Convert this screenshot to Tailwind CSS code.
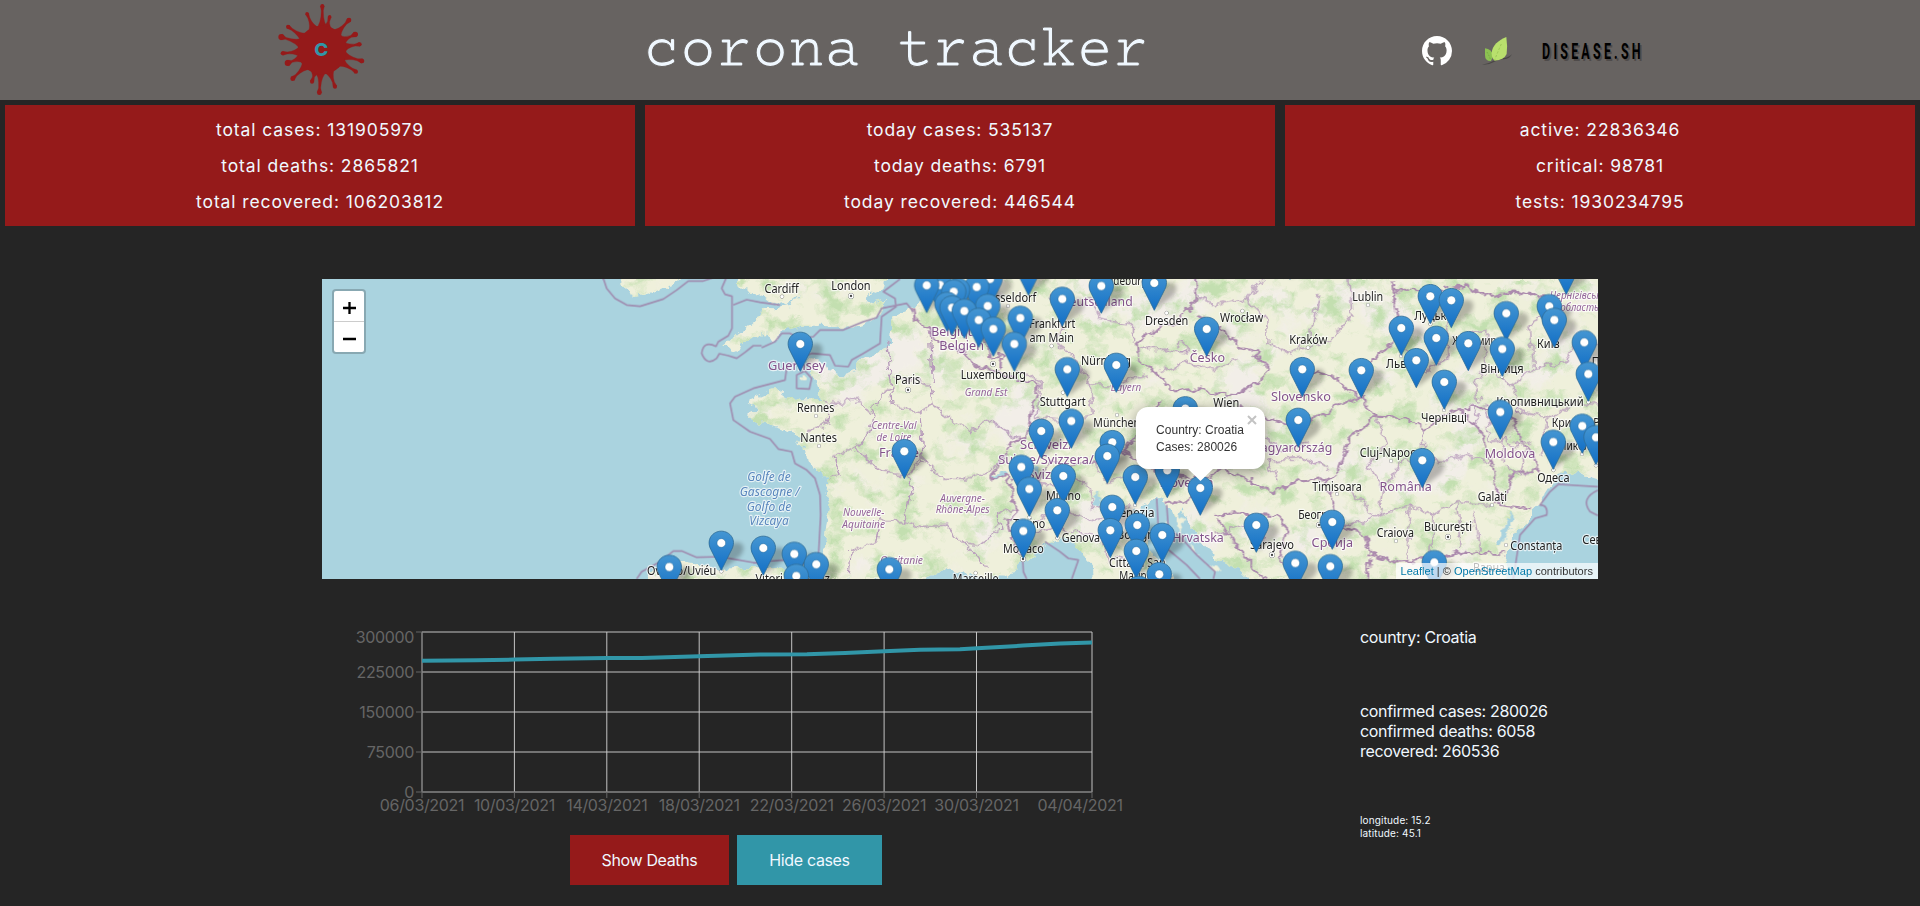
<!DOCTYPE html>
<html lang="en">
<head>
<meta charset="utf-8">
<title>corona tracker</title>
<script src="https://cdn.jsdelivr.net/npm/@tailwindcss/browser@4"></script>
</head>
<body class="bg-[#252525] font-['Inter',sans-serif] text-[#f0f8ff] h-[906px] overflow-hidden">

<header class="flex h-[100px] items-center bg-[#676361]">
  <svg id="logo" class="ml-[260px] h-[100px] w-[130px] shrink-0" viewBox="0 0 390 300">
    <g id="spikes" fill="#951a1a" stroke="#951a1a"></g>
    <circle cx="186" cy="150" r="73" fill="#951a1a"/>
    <text x="184" y="168" text-anchor="middle" font-family="Inter" font-weight="800" font-size="54" textLength="42" lengthAdjust="spacingAndGlyphs" fill="#3196a8">C</text>
  </svg>
  <h1 class="ml-[254px] w-[511px] shrink-0 whitespace-nowrap pt-[7px] font-['Courier_Prime','Nimbus_Mono_PS','Liberation_Mono',monospace] text-[60px] leading-[93px] tracking-[0.07px] [-webkit-text-stroke:1px_#676361]">corona tracker</h1>
  <nav class="ml-[267px] flex items-center pt-[2px]">
    <svg class="h-[30px] w-[30px]" viewBox="0 0 16 16" fill="#fff"><path d="M8 0C3.58 0 0 3.58 0 8c0 3.54 2.29 6.53 5.47 7.59.4.07.55-.17.55-.38 0-.19-.01-.82-.01-1.49-2.01.37-2.53-.49-2.69-.94-.09-.23-.48-.94-.82-1.13-.28-.15-.68-.52-.01-.53.63-.01 1.08.58 1.23.82.72 1.21 1.87.87 2.33.66.07-.52.28-.87.51-1.07-1.78-.2-3.64-.89-3.64-3.95 0-.87.31-1.59.82-2.15-.08-.2-.36-1.02.08-2.12 0 0 .67-.21 2.2.82.64-.18 1.32-.27 2-.27s1.36.09 2 .27c1.53-1.04 2.2-.82 2.2-.82.44 1.1.16 1.92.08 2.12.51.56.82 1.27.82 2.15 0 3.07-1.87 3.75-3.65 3.95.29.25.54.73.54 1.48 0 1.07-.01 1.93-.01 2.2 0 .21.15.46.55.38A8.01 8.01 0 0 0 16 8c0-4.42-3.58-8-8-8z"/></svg>
    <svg class="ml-[30px] h-[30px] w-[30px]" viewBox="0 0 90 90">
      <path d="M0 86Q20 84 38 73T68 66Q84 62 90 54Q84 68 66 70Q50 68 36 78Q18 88 0 86Z" fill="#4a4746"/>
      <path d="M9 37Q29 40 34 58L27 75Q9 76 9 56Z" fill="#8cc152"/>
      <path d="M73 3C50 12 30 28 29 52Q29 68 38 74Q66 72 74 54Q77 30 73 3Z" fill="#b9e06d"/>
      <path d="M58 24Q47 48 38 72" stroke="#9cc655" stroke-width="3" stroke-dasharray="7 5" fill="none"/>
      <path d="M15 48Q22 60 26 72" stroke="#689c3a" stroke-width="2" stroke-dasharray="5 4" fill="none"/>
    </svg>
    <svg class="ml-[26px] h-[40px] w-[110px]" viewBox="0 0 110 40">
      <g transform="scale(.58 1)" font-family="Roboto" font-weight="700" font-size="21.5">
        <text x="10" y="29.7" textLength="170" fill="#4f4b4a">DISEASE.SH</text>
        <text x="7" y="28.3" textLength="170" fill="#000">DISEASE.SH</text>
      </g>
    </svg>
  </nav>
</header>

<section class="mt-[5px] grid grid-cols-3 gap-[10px] px-[5px] text-center text-[17.5px] leading-[36px] tracking-[0.9px]">
  <div class="h-[121px] bg-[#951a1a] pt-[7px]"><p>total cases: 131905979</p><p>total deaths: 2865821</p><p>total recovered: 106203812</p></div>
  <div class="h-[121px] bg-[#951a1a] pt-[7px]"><p>today cases: 535137</p><p>today deaths: 6791</p><p>today recovered: 446544</p></div>
  <div class="h-[121px] bg-[#951a1a] pt-[7px]"><p>active: 22836346</p><p>critical: 98781</p><p>tests: 1930234795</p></div>
</section>

<main class="mx-auto mt-[53px] w-[1276px]">
  <div class="relative h-[300px] overflow-hidden bg-[#aad3df] font-['Liberation_Sans',sans-serif]">
    <svg class="block h-[300px] w-[1276px]" viewBox="0 0 3828 900">
      <defs>
        <filter id="rough" x="0" y="0" width="3828" height="900" filterUnits="userSpaceOnUse" color-interpolation-filters="sRGB"><feTurbulence type="fractalNoise" baseFrequency=".035" numOctaves="3" seed="4"/><feDisplacementMap in="SourceGraphic" scale="34" xChannelSelector="R" yChannelSelector="G"/></filter>
        <filter id="woods" x="0" y="0" width="3828" height="900" filterUnits="userSpaceOnUse" color-interpolation-filters="sRGB"><feTurbulence type="fractalNoise" baseFrequency=".014 .018" numOctaves="6" seed="11"/><feColorMatrix values="0 0 0 0 .765  0 0 0 0 .875  0 0 0 0 .69  3.6 0 0 0 -1.75"/><feComposite in2="SourceGraphic" operator="in"/></filter>
        <filter id="fields" x="0" y="0" width="3828" height="900" filterUnits="userSpaceOnUse" color-interpolation-filters="sRGB"><feTurbulence type="fractalNoise" baseFrequency=".006" numOctaves="5" seed="31"/><feColorMatrix values="0 0 0 0 .95  0 0 0 0 .935  0 0 0 0 .91  0 6 0 0 -3.1"/><feComposite in2="SourceGraphic" operator="in"/></filter>
        <filter id="soft" x="-50%" y="-50%" width="200%" height="200%"><feGaussianBlur stdDeviation="7"/></filter>
        <linearGradient id="blue" x1="0" y1="0" x2="0" y2="1"><stop offset="0" stop-color="#4596d2"/><stop offset="1" stop-color="#126fc6"/></linearGradient>
        <g id="land">
          <path transform="translate(-6 -12)" d="M885 0L905 30L930 48L938 68L1000 52L1060 28L1090 0Z"/>
          <g transform="translate(1194 -12)">
            <path d="M50 0L45 22L65 45L110 50L140 72L200 92L240 60L215 92L165 100L125 98L108 132L62 172L10 212L48 228L64 206L108 190L138 174L160 208L188 165L250 152L310 152L370 160L430 150L476 120L500 75L440 84L442 62L490 45L500 0Z"/>
            <path d="M655 0L618 50L576 100L515 125L510 210L480 232L415 258L410 290L380 300L320 292L310 262L262 256L275 290L292 330L300 370L245 370L208 374L190 345L140 352L80 378L112 402L82 414L105 442L155 452L210 470L242 482L232 508L262 532L266 562L300 598L326 612L320 645L330 685L320 740L313 800L304 870L290 890L200 885L100 880L0 884L-60 868L-110 858L-150 870L-190 880L-218 900L-222 920L622 920L650 890L675 878L720 888L770 904L862 908L892 870L930 850L975 812L1010 792L1048 790L1085 832L1118 874L1122 920L1376 920L1340 872L1290 832L1272 782L1240 742L1236 708L1280 690L1332 664L1346 700L1362 734L1386 700L1416 760L1446 805L1490 852L1560 888L1592 920L2355 920L2364 835L2380 782L2430 742L2430 712L2462 682L2500 622L2508 604L2560 592L2600 604L2650 620L2650 0Z"/>
          </g>
        </g>
      </defs>
      <g filter="url(#rough)"><use href="#land" fill="#eff0db"/></g>
      <g filter="url(#rough)"><g filter="url(#fields)"><use href="#land"/></g></g>
      <g filter="url(#rough)"><g filter="url(#woods)"><use href="#land"/></g></g>

      <!-- Channel Island, Venetian lagoon, Croatian islands, lakes -->
      <g fill="#aad3df" filter="url(#rough)"><path d="M2010 590L2050 575L2060 584L2020 602ZM2125 565L2150 560L2150 585L2130 580ZM2320 640L2335 660L2325 690L2314 670ZM3520 800L3570 700L3580 720L3540 790Z"/></g>
      <g fill="#eff0db" filter="url(#rough)"><path d="M1438 290L1456 288L1452 304L1440 302ZM2535 720L2545 770L2532 750ZM2560 700L2572 720L2590 710L2580 750L2565 745ZM2600 790L2630 830L2615 825ZM2640 850L2700 868L2680 880Z"/></g>

      <!-- territorial waters -->
      <g fill="none" stroke="#9f8db0" stroke-width="5" stroke-linejoin="round">
        <path transform="translate(-6 -12)" d="M850 10L860 40L885 70L920 90L960 94L1030 72L1070 45L1105 18L1150 18L1180 8M1218 10L1205 40L1215 58L1236 64V160L1225 182L1195 200L1188 214Q1150 195 1145 235Q1160 275 1190 250L1198 236L1225 242L1250 250L1275 232L1300 212L1325 212M950 912L965 890L1020 860L1060 828L1085 828L1130 847L1200 845L1240 852L1320 866"/>
        <g transform="translate(1194 -12)">
          <path d="M40 90L80 74L120 82L180 90M125 218L165 200L185 175L210 175L240 190L280 185L300 165L370 165L430 140L470 128L485 100L560 85L580 110M540 12L490 50L525 70L528 95L485 125L480 205L430 235L395 255L385 275L345 272L330 240L275 235L250 245L200 280L195 315L100 340L45 365L30 385L40 435L90 470L150 492L175 522L215 530L225 565L260 585L285 610L300 660L302 720L295 850L295 880M230 300L255 288L275 310L268 342L230 340ZM100 864L130 860L190 855L280 870"/>
        </g>
        <path transform="translate(2034 -12)" d="M80 912L70 890L68 852M135 800L180 830L205 850L235 855L215 912M470 670L475 760L500 820L560 870L600 912M500 690L505 760L545 790L590 840L645 890L640 912"/>
        <path transform="translate(2934 -12)" d="M894 645Q840 670 870 710L894 722M640 912L660 780L705 730L740 720Q745 690 720 690L750 650L775 628L894 635"/>
      </g>
      <!-- land borders -->
      <g fill="none" stroke="#ac8bae" stroke-width="6.5" filter="url(#rough)">
        <path transform="translate(1194 -12)" d="M580 100L585 140L625 155L640 190L690 215L735 240L780 280L830 285L870 310L955 325L935 400L920 490L880 500L850 540L815 610L860 600L880 660L890 710L860 740L880 800L905 850M800 200L805 240L845 245L840 280M780 12L770 120L790 190L800 210"/>
        <path transform="translate(2034 -12)" d="M585 12L590 70L560 110L530 140L470 160L410 200L415 250L480 310L520 350L590 340L640 355L710 360L770 320L810 280L770 240L720 220L680 170L640 150L590 120M480 380L460 440L410 480L370 530L300 560L230 570L150 560L100 640L40 600M370 530L420 560L490 600L590 610L660 590L720 550L730 480L760 430L720 390M500 680L560 680L600 650L660 580L760 620L820 650L900 620L990 610M800 420L870 460L950 430L1020 390L1090 360M640 720L700 715L830 720L860 760L840 850L880 912M650 730L700 800L760 880L800 912"/>
        <path transform="translate(2934 -12)" d="M275 12L285 100L300 180L220 250L190 290L180 370L90 300L30 290M180 370L230 420L150 490L115 590L75 625L100 680L120 760L200 780L210 840L300 860L400 850L500 830L590 840L620 830M230 425L320 430L370 460L420 430L480 400L540 470L570 540L590 620L595 690M480 400L560 395L640 430L655 490L700 540L715 590L640 590L610 680M275 45L400 50L500 35L560 65L640 50L760 70M595 690L690 700M210 850L200 912"/>
      </g>
      <!-- regions -->
      <g fill="none" stroke="#b79abb" stroke-width="4" filter="url(#rough)">
        <path transform="translate(1194 -12)" d="M300 378L350 385L400 375L460 410L480 360L515 340L500 200M515 340L520 390L600 410L640 390L630 330L520 310M640 390L700 440L750 470L810 435L900 490M460 410L450 470L410 520L345 540L360 600L325 605M410 520L450 560L480 590L560 600L610 560L600 420M560 600L580 640L550 740L480 740L470 800L390 830L385 900M550 740L600 755L680 750L720 800L780 810L840 760L830 720L880 700M610 560L670 610L740 610L810 590L860 540M330 390L320 450L260 470M640 320L630 160M720 790L760 830L800 880"/>
        <path transform="translate(2034 -12)" d="M270 60L300 130L400 150L400 200M150 60L200 110L170 200L230 250L270 330L280 420L200 440L110 430L120 320L50 280M270 330L340 330L440 300M590 60L650 90L740 70L790 12M740 70L800 130L800 200L870 240L930 180L960 60M480 290L560 260L640 290L720 250M620 420L660 520L730 500M40 600L160 640L200 600L270 640L280 700L400 690M100 740L180 700L280 740L380 720M280 560L320 620L390 600M420 220L500 220L560 240M930 500L850 530L770 470M840 620L800 560L900 550L990 580M650 780L720 750L800 790M60 770L160 760L300 780L330 860L420 830M540 220L530 210Q550 195 565 220Q560 238 540 230"/>
        <path transform="translate(2934 -12)" d="M150 12L155 120L90 200L0 220M270 160L340 250L380 290L450 240L440 150L480 60M480 180L560 170L560 280L640 330L700 280L690 150L760 100M560 280L520 330L540 380M640 330L660 410L760 430L820 380L894 390M700 280L790 260L830 200L894 210M230 430L260 510L200 570L250 640L310 560L370 540L370 460M370 540L430 560L500 540L570 560M250 640L240 720L330 690L400 720L470 680L580 690M330 690L320 850M400 720L390 850M470 680L480 820M520 710L540 830M150 640L220 720M120 760L240 720M740 430L730 540M510 390L540 430L520 450M560 400L570 440L610 430M570 500L620 490L640 520L690 500M560 420L570 500M600 400L610 560M640 500L680 520L660 600L700 590M620 570L650 600"/>
      </g>
      <g id="labels" font-family="Noto Sans" text-anchor="middle" paint-order="stroke" stroke="#ffffffb0" stroke-width="7" stroke-linejoin="round"></g>
      <g id="pins"></g>
    </svg>

    <div class="absolute left-[10px] top-[10px] h-[65px] w-[34px] rounded-[4px] border-2 border-black/20 bg-white bg-clip-padding">
      <svg class="block h-[61px] w-[30px]" viewBox="0 0 30 61"><path d="M0 30.5H30" stroke="#ccc"/><path d="M9 17H22M15.5 11V23M9 48H22" stroke="#000" stroke-width="2.3"/></svg>
    </div>

    <div class="absolute left-[814px] top-[128px] h-[62px] w-[129px] rounded-[12px] bg-white pl-[20px] pt-[15px] text-[12px] leading-[17px] tracking-[0.04px] text-[#333] shadow-[0_3px_14px_rgba(0,0,0,0.4)]">
      <p>Country: Croatia</p><p>Cases: 280026</p>
      <svg class="absolute right-[8px] top-[8px] h-[10px] w-[10px]" viewBox="0 0 10 10"><path d="M1 1L9 9M9 1L1 9" stroke="#c3c3c3" stroke-width="2"/></svg>
      <svg class="absolute left-[51px] top-[61px] h-[13px] w-[27px]" viewBox="0 0 27 13"><path d="M0 0H27L13.5 13Z" fill="#fff"/></svg>
    </div>

    <div class="absolute bottom-0 right-0 h-[16px] whitespace-nowrap bg-white/70 px-[5px] text-[11px] leading-[16px] tracking-[0.03px] text-[#333]"><span class="text-[#0078a8]">Leaflet</span> | © <span class="text-[#0078a8]">OpenStreetMap</span> contributors</div>
  </div>

  <div class="flex pt-[41px]">
    <div class="w-[840px]">
      <svg class="block h-[200px] w-[840px]" viewBox="322 620 840 200" font-family="Inter" font-size="16" letter-spacing="-.33" fill="#666">
        <g stroke="#ccc" stroke-opacity=".95"><path d="M422 632H1092M422 672H1092M422 712H1092M422 752H1092M422 792H1092M422 632V792M514.4 632V792M606.8 632V792M699.2 632V792M791.7 632V792M884.1 632V792M976.5 632V792M1092 632V792" stroke-width="1" fill="none"/></g>
        <path d="M416 632H422M416 672H422M416 712H422M416 752H422M416 792H1092M422 632V798M514.4 792V798M606.8 792V798M699.2 792V798M791.7 792V798M884.1 792V798M976.5 792V798M1092 792V798" stroke="#666" fill="none"/>
        <path d="M422 660.8L476 660.3L514 659.6L553 658.8L607 658L642 657.9L699 656.3L760 654.6L807 654.2L845 653L884 651.3L920 649.7L960 649.3L977 648.3L1023 645.6L1060 643.5L1092 642.6" fill="none" stroke="#3196a8" stroke-width="4"/>
        <g text-anchor="end"><text x="414" y="643">300000</text><text x="414" y="678">225000</text><text x="414" y="718">150000</text><text x="414" y="758">75000</text><text x="414" y="798">0</text></g>
        <g text-anchor="middle"><text x="422" y="811">06/03/2021</text><text x="514.4" y="811">10/03/2021</text><text x="606.8" y="811">14/03/2021</text><text x="699.2" y="811">18/03/2021</text><text x="791.7" y="811">22/03/2021</text><text x="884.1" y="811">26/03/2021</text><text x="976.5" y="811">30/03/2021</text><text x="1080" y="811">04/04/2021</text></g>
      </svg>
      <div class="mt-[15px] flex gap-[8px] pl-[248px] text-[16px] tracking-[-0.35px]">
        <button class="h-[50px] w-[159px] bg-[#951a1a]">Show Deaths</button>
        <button class="h-[50px] w-[145px] bg-[#3196a8]">Hide cases</button>
      </div>
    </div>
    <div class="pl-[198px] pt-[7px] text-[16px] leading-[20px] tracking-[-0.32px]">
      <p>country: Croatia</p>
      <div class="mt-[54px]"><p>confirmed cases: 280026</p><p>confirmed deaths: 6058</p><p>recovered: 260536</p></div>
      <div class="mt-[53px] text-[10px] leading-[13px] tracking-[0.15px]"><p>longitude: 15.2</p><p>latitude: 45.1</p></div>
    </div>
  </div>
</main>

<script>
const NS = 'http://www.w3.org/2000/svg';
function add(parent, tag, attrs, text) {
  const e = document.createElementNS(NS, tag);
  for (const k in attrs) e.setAttribute(k, attrs[k]);
  if (text) e.textContent = text;
  parent.appendChild(e);
  return e;
}

// virus spikes: tip x, tip y, bulb radius
const spikes = document.getElementById('spikes');
[[187,18,6],[209,50,5],[267,60,7],[286,103,8],[299,133,6],[306,183,7],[288,215,6],[225,260,6],[178,278,7],[156,245,6],[98,236,7],[83,189,9],[68,160,6],[64,111,9],[84,80,6],[141,41,5]].forEach(([x, y, r]) => {
  const dx = x - 186, dy = y - 150, d = Math.hypot(dx, dy), ux = dx / d, uy = dy / d;
  const p = (l, s) => (186 + ux * l - uy * s) + ' ' + (150 + uy * l + ux * s);
  add(spikes, 'path', {'stroke-width': 1, d: `M${p(62,20)}Q${p(78,3)} ${p(d - 14,3)}L${p(d,r)}L${p(d,-r)}L${p(d - 14,-3)}Q${p(78,-3)} ${p(62,-20)}Z`});
  add(spikes, 'circle', {cx: x, cy: y, r: r, 'stroke-width': 0});
});

// labels: offset x, centre, baseline, width, text, kind
const A = -6, B = 1194, C = 2034, D = 2934;
const kinds = {
  t: {fill: '#222', 'font-size': 36},
  c: {fill: '#83538b', 'font-size': 39},
  r: {fill: '#94659a', 'font-size': 32, 'font-style': 'italic'},
  s: {fill: '#5a87bd', 'font-size': 38, 'font-style': 'italic'}
};
const labels = document.getElementById('labels');
[
[A,1085,899,208,'Oviedo/Uviéu','t'],
[B,185,55,103,'Cardiff','t'],[B,393,45,118,'London','t'],[B,230,284,172,'Guernsey','c'],[B,563,327,76,'Paris','t'],
[B,820,311,196,'Luxembourg','t'],[B,287,410,112,'Rennes','t'],[B,296,500,110,'Nantes','t'],[B,798,363,128,'Grand Est','r'],
[B,522,462,135,'Centre-Val','r'],[B,522,497,105,'de Loire','r'],[B,537,547,120,'France','c'],[B,722,182,176,'Belgique /','c'],
[B,725,226,134,'Belgien','c'],[B,147,619,130,'Golfe de','s'],[B,149,663,180,'Gascogne /','s'],[B,147,707,134,'Golfo de','s'],
[B,147,751,118,'Vizcaya','s'],[B,431,723,124,'Nouvelle-','r'],[B,431,758,128,'Aquitaine','r'],[B,728,680,134,'Auvergne-','r'],
[B,728,714,162,'Rhône-Alpes','r'],[B,545,867,128,'Occitanie','r'],[B,218,924,223,'Vitoria-Gasteiz','t'],[B,767,925,137,'Marseille','t'],
[B,910,834,122,'Monaco','t'],[B,928,760,96,'Torino','t'],[B,865,82,168,'Düsseldorf','t'],
[C,157,160,138,'Frankfurt','t'],[C,155,201,133,'am Main','t'],[C,290,94,216,'Deutschland','c'],[C,360,31,165,'Magdeburg','t'],
[C,500,150,130,'Dresden','t'],[C,725,141,130,'Wrocław','t'],[C,925,207,115,'Kraków','t'],[C,622,262,106,'Česko','c'],
[C,318,271,150,'Nürnberg','t'],[C,378,348,92,'Bayern','r'],[C,188,392,138,'Stuttgart','t'],[C,350,457,140,'München','t'],
[C,679,395,78,'Wien','t'],[C,903,377,180,'Slovensko','c'],[C,873,531,248,'Magyarország','c'],[C,140,521,160,'Schweiz/','c'],
[C,138,566,287,'Suisse/Svizzera/','c'],[C,137,611,110,'Svizra','c'],[C,190,675,104,'Milano','t'],[C,243,801,115,'Genova','t'],
[C,401,725,124,'Venezia','t'],[C,416,791,130,'Bologna','t'],[C,412,876,170,'Città di San','t'],[C,408,916,100,'Marino','t'],
[C,560,635,160,'Slovenija','c'],[C,594,801,155,'Hrvatska','c'],[C,816,823,132,'Sarajevo','t'],
[D,203,79,93,'Lublin','t'],[D,391,135,97,'Луцьк','t'],[D,523,210,132,'Житомир','t'],[D,745,218,68,'Київ','t'],
[D,835,73,170,'Чернігівська','r'],[D,839,107,115,'область','r'],[D,303,280,90,'Львів','t'],[D,606,294,130,'Вінниця','t'],
[D,432,442,138,'Чернівці','t'],[D,720,394,262,'Кропивницький','t'],[D,838,455,166,'Кривий Ріг','t'],[D,842,524,140,'Миколаїв','t'],
[D,760,622,97,'Одеса','t'],[D,630,549,152,'Moldova','c'],[D,317,648,157,'România','c'],[D,272,546,185,'Cluj-Napoca','t'],
[D,111,647,148,'Timișoara','t'],[D,577,678,88,'Galați','t'],[D,286,785,112,'Craiova','t'],[D,444,768,144,'București','t'],
[D,709,825,156,'Constanța','t'],[D,950,806,206,'Севастополь','t'],[D,57,731,125,'Београд','t'],[D,97,817,125,'Србија','c'],
[D,567,890,96,'Варна','t'],[D,940,273,130,'Полтава','t']
].forEach(([o, x, y, w, s, k]) => add(labels, 'text', Object.assign({x: x + o, y: y - 12, textLength: w, lengthAdjust: 'spacingAndGlyphs'}, kinds[k]), s));

// town dots, then capitals with a ring
[[A,1204,889],[B,186,65],[B,288,423],[B,297,513],[B,767,894],[B,928,727],[B,864,93],[C,155,213],[C,500,114],[C,727,108],[C,924,218],[C,189,353],[C,351,420],[C,172,789],[C,405,690],[D,204,90],[D,391,147],[D,303,243],[D,606,305],[D,432,405],[D,865,381],[D,846,537],[D,760,585],[D,273,558],[D,111,657],[D,576,690],[D,288,798],[D,618,810],[D,888,571]]
  .forEach(([o, x, y]) => add(labels, 'circle', {cx: x + o, cy: y - 12, r: 5, fill: '#fff', stroke: '#555', 'stroke-width': 2}));
[[B,393,63],[B,564,345],[B,819,267],[B,909,852],[C,816,840],[D,444,786],[D,57,750]].forEach(([o, x, y]) => {
  add(labels, 'circle', {cx: x + o, cy: y - 12, r: 8, fill: '#fff', stroke: '#444', 'stroke-width': 2.5});
  add(labels, 'circle', {cx: x + o, cy: y - 12, r: 3.5, fill: '#444', stroke: 'none'});
});

// markers by head centre, in page pixels; southern ones overlap northern ones
const heads = [[669.3,567],[721.3,543],[926.7,285.3],[940,285],[953.7,291.7],[957.5,290],[976.7,287],[990,279],[952,307.7],[947,304],[964.3,311],[987.7,306],[978.7,320],[993.3,329],[1014.3,344],[1020.3,318],[800.3,344],[904.3,451.3],[1021.3,467],[1029.3,489],[1023.3,531],[763.3,548],[794.3,554],[816.3,564.3],[796.3,576],[889.3,569.3],[1028.5,268],[1062.3,299],[1101.3,286],[1154.3,283],[1206.7,329],[1067.3,369.3],[1116.3,365],[1185.3,408.5],[1071.3,421],[1041.3,431],[1112.3,442.3],[1107.3,456],[1063.3,476],[1057.3,510.3],[1135.3,477],[1167.3,470.3],[1200.3,488],[1112.3,507],[1110.3,530.3],[1137.3,525],[1136.3,551],[1162.3,535],[1159.3,574.3],[1138.7,588],[1256.3,525],[1295.3,563],[1302.3,369.3],[1298.3,420],[1290,252],[1361.3,370.3],[1401.3,328],[1430.3,296.3],[1451.3,300.3],[1436.3,338],[1416.3,360.3],[1444.3,382],[1468.3,343.3],[1506.3,313.3],[1502.3,349],[1549.3,306.3],[1554.3,320],[1566.3,267],[1584.3,342.3],[1588.3,374],[1500.3,412],[1553.3,442],[1582.3,426],[1596,437.3],[1422.3,460.3],[1332.3,522],[1330.3,566.3],[1434.3,562.3]]
  .sort((a, b) => a[1] - b[1]).map(([x, y]) => [(x - 322) * 3, (y - 279) * 3]);
const pins = document.getElementById('pins');
heads.forEach(([x, y]) => add(pins, 'path', {transform: `translate(${x} ${y})`, d: 'M0 82L16 20Q30 -8 58 0Q76 14 56 40Z', fill: '#000', opacity: .25, filter: 'url(#soft)'}));
heads.forEach(([x, y]) => {
  const g = add(pins, 'g', {transform: `translate(${x} ${y})`});
  add(g, 'path', {d: 'M0 82L-31 20C-47 -10 -26 -35.5 0 -35.5S47 -10 31 20Z', fill: 'url(#blue)', stroke: '#2e6c97', 'stroke-width': 2.5});
  add(g, 'circle', {r: 13, fill: '#fff', stroke: '#2e6c97', 'stroke-opacity': .7, 'stroke-width': 2});
});
</script>
</body>
</html>
